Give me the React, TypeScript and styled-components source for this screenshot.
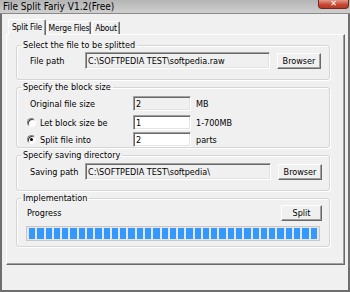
import React from "react";
import styled, { createGlobalStyle } from "styled-components";

const UI_FONT = `"Liberation Sans Narrow", "DejaVu Sans Condensed", "Liberation Sans", sans-serif`;

const GlobalStyle = createGlobalStyle`
  html, body {
    margin: 0;
    padding: 0;
  }
  body {
    width: 350px;
    height: 292px;
    overflow: hidden;
    background: #f0f0f0;
  }
`;

const Window = styled.div`
  width: 350px;
  height: 292px;
  box-sizing: border-box;
  display: flex;
  flex-direction: column;
  background: #f0f0f0;
  border: 2px solid #6e6e6e;
  border-top: none;
  font-family: ${UI_FONT};
  font-size: 9px;
  color: #000;
`;

const TitleBar = styled.div`
  height: 13px;
  margin: 0 -2px;
  display: flex;
  justify-content: space-between;
  align-items: flex-start;
  background: linear-gradient(#b4b4b4, #cfcfcf);
  border-bottom: 1px solid #8a8a8a;
`;

const Title = styled.span`
  padding: 1px 0 0 3px;
  font-size: 10px;
  line-height: 12px;
  color: #000;
`;

const CloseButton = styled.div`
  width: 31px;
  height: 9px;
  box-sizing: border-box;
  margin-right: 1px;
  display: flex;
  align-items: center;
  justify-content: center;
  background: linear-gradient(#e29a88, #c7442f 60%, #b73a27);
  border: 1px solid #6f2a20;
  border-top: none;
  border-radius: 0 0 4px 4px;
  color: #fff;
  font-family: "DejaVu Sans", sans-serif;
  font-weight: bold;
  font-size: 8px;
  line-height: 8px;
`;

const Body = styled.div`
  flex: 1;
  display: flex;
  flex-direction: column;
  padding: 4px 3px 25px 4px;
`;

const TabStrip = styled.div`
  display: flex;
  align-items: flex-end;
  gap: 1px;
  padding-left: 2px;
  height: 16px;
  position: relative;
  z-index: 1;
`;

const Tab = styled.div<{ $active?: boolean; $w: number }>`
  width: ${(p) => p.$w}px;
  height: ${(p) => (p.$active ? 16 : 13)}px;
  box-sizing: border-box;
  flex: none;
  display: flex;
  align-items: center;
  justify-content: center;
  white-space: nowrap;
  font-size: 8.5px;
  letter-spacing: -0.2px;
  background: #f0f0f0;
  border-top: 1px solid #fff;
  border-left: 1px solid #fff;
  border-right: 1px solid #696969;
  box-shadow: inset -1px 0 0 #a0a0a0;
  border-radius: 2px 2px 0 0;
  margin-bottom: ${(p) => (p.$active ? -1 : 0)}px;
  padding-bottom: ${(p) => (p.$active ? 2 : 0)}px;
`;

const Panel = styled.div`
  flex: 1;
  display: flex;
  flex-direction: column;
  gap: 1px;
  padding: 4px 14px 0 9px;
  border-top: 1px solid #fff;
  border-left: 1px solid #fff;
  border-right: 1px solid #696969;
  border-bottom: 1px solid #696969;
  box-shadow: inset -1px -1px 0 #a0a0a0;
`;

const Group = styled.fieldset<{ $h: number }>`
  margin: 0;
  padding: 0 0 0 13px;
  height: ${(p) => p.$h}px;
  box-sizing: border-box;
  min-width: 0;
  border: 1px solid #d5d5d5;
  border-radius: 3px;
  box-shadow: inset 1px 1px 0 #fff, 1px 1px 0 #fff;
`;

const Legend = styled.legend`
  margin-left: -9px;
  padding: 0 2px;
  font-size: 9px;
  line-height: 12px;
`;

const Row = styled.div<{ $h?: number; $mt?: number }>`
  display: flex;
  align-items: center;
  height: ${(p) => p.$h ?? 17}px;
  margin-top: ${(p) => p.$mt ?? 0}px;
`;

const Label = styled.span<{ $w: number }>`
  width: ${(p) => p.$w}px;
  flex: none;
  white-space: nowrap;
`;

const TextBox = styled.div<{ $w: number; $h?: number; $white?: boolean }>`
  width: ${(p) => p.$w}px;
  height: ${(p) => p.$h ?? 17}px;
  box-sizing: border-box;
  flex: none;
  display: flex;
  align-items: center;
  padding-left: 2px;
  background: ${(p) => (p.$white ? "#fff" : "#f0f0f0")};
  border-top: 1px solid #a0a0a0;
  border-left: 1px solid #a0a0a0;
  border-right: 1px solid #fff;
  border-bottom: 1px solid #fff;
  box-shadow: inset 1px 1px 0 #696969, inset -1px -1px 0 #e3e3e3;
  white-space: nowrap;
  overflow: hidden;
`;

const Button = styled.div<{ $w: number; $ml: number }>`
  width: ${(p) => p.$w}px;
  height: 16px;
  box-sizing: border-box;
  flex: none;
  margin-left: ${(p) => p.$ml}px;
  display: flex;
  align-items: center;
  justify-content: center;
  background: #f0f0f0;
  border-top: 1px solid #fff;
  border-left: 1px solid #fff;
  border-right: 1px solid #696969;
  border-bottom: 1px solid #696969;
  box-shadow: inset -1px -1px 0 #a0a0a0;
`;

const Unit = styled.span`
  margin-left: 5px;
  white-space: nowrap;
`;

const Radio = styled.span<{ $checked?: boolean }>`
  width: 9px;
  height: 9px;
  box-sizing: border-box;
  flex: none;
  margin: 0 4px 0 -3px;
  border-radius: 50%;
  background: #fff;
  border: 1px solid;
  border-color: #808080 #fff #fff #808080;
  box-shadow: inset 1px 1px 0 #404040;
  display: flex;
  align-items: center;
  justify-content: center;
  &::after {
    content: "";
    width: 3px;
    height: 3px;
    border-radius: 50%;
    background: ${(p) => (p.$checked ? "#000" : "transparent")};
  }
`;

const ProgressBar = styled.div`
  width: 294px;
  height: 15px;
  box-sizing: border-box;
  margin: 0 0 0 -4px;
  padding: 1px 2px 1px 2px;
  display: flex;
  gap: 2px;
  background: #e6e6e6;
  border: 1px solid #c8c8c8;
`;

const Segment = styled.div`
  flex: 1;
  background: #3399ff;
`;

const segments = Array.from({ length: 35 }, (_, i) => i);

export default function App() {
  return (
    <>
      <GlobalStyle />
      <Window>
        <TitleBar>
          <Title>File Split Fariy V1.2(Free)</Title>
          <CloseButton>✕</CloseButton>
        </TitleBar>
        <Body>
          <TabStrip>
            <Tab $active $w={38}>Split File</Tab>
            <Tab $w={44}>Merge Files</Tab>
            <Tab $w={28}>About</Tab>
          </TabStrip>
          <Panel>
            <Group $h={41}>
              <Legend>Select the file to be splitted</Legend>
              <Row $mt={1}>
                <Label $w={55}>File path</Label>
                <TextBox $w={185}>C:\SOFTPEDIA TEST\softpedia.raw</TextBox>
                <Button $w={44} $ml={7}>Browser</Button>
              </Row>
            </Group>
            <Group $h={67}>
              <Legend>Specify the block size</Legend>
              <Row $h={15} $mt={3}>
                <Label $w={103}>Original file size</Label>
                <TextBox $w={58} $h={15}>2</TextBox>
                <Unit>MB</Unit>
              </Row>
              <Row $h={15} $mt={4}>
                <Radio />
                <Label $w={93}>Let block size be</Label>
                <TextBox $w={58} $h={15} $white>1</TextBox>
                <Unit>1-700MB</Unit>
              </Row>
              <Row $h={15} $mt={2}>
                <Radio $checked />
                <Label $w={93}>Split file into</Label>
                <TextBox $w={58} $h={15} $white>2</TextBox>
                <Unit>parts</Unit>
              </Row>
            </Group>
            <Group $h={42}>
              <Legend>Specify saving directory</Legend>
              <Row $mt={2}>
                <Label $w={55}>Saving path</Label>
                <TextBox $w={186}>C:\SOFTPEDIA TEST\softpedia\</TextBox>
                <Button $w={44} $ml={7}>Browser</Button>
              </Row>
            </Group>
            <Group $h={55}>
              <Legend>Implementation</Legend>
              <Row $h={16} $mt={1}>
                <Label $w={254} style={{ marginLeft: -3 }}>Progress</Label>
                <Button $w={41} $ml={0}>Split</Button>
              </Row>
              <Row $h={15} $mt={5}>
                <ProgressBar>
                  {segments.map((i) => (
                    <Segment key={i} />
                  ))}
                </ProgressBar>
              </Row>
            </Group>
          </Panel>
        </Body>
      </Window>
    </>
  );
}
